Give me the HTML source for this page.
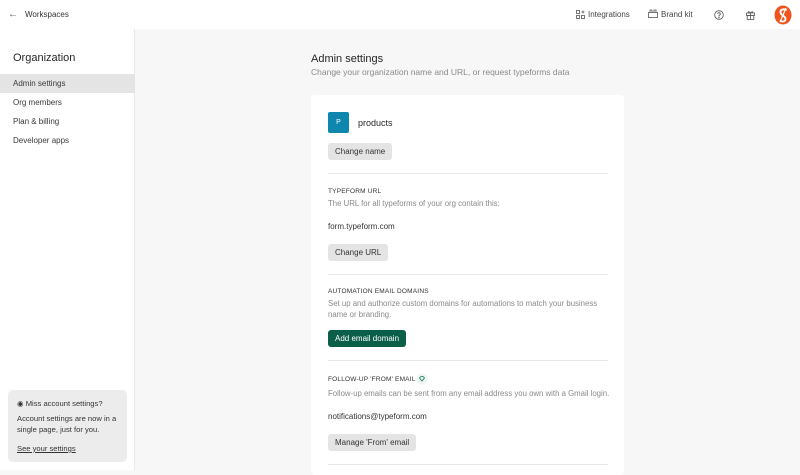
<!DOCTYPE html>
<html><head><meta charset="utf-8"><style>
*{margin:0;padding:0;box-sizing:border-box}
body{width:800px;height:470px;overflow:hidden;font-family:"Liberation Sans",sans-serif;background:#f7f7f7;color:#262627;position:relative}
.top{position:absolute;left:0;top:0;width:800px;height:29px;background:#fff;font-size:8px}
.side{position:absolute;left:0;top:29px;width:135px;height:441px;background:#fff;border-right:1px solid #e8e8e8}
.abs{position:absolute}
.nav{position:absolute;left:0;width:135px;height:19px;font-size:8px;line-height:19px;padding-left:13px;color:#3a3a3a}
.card{position:absolute;left:311px;top:95px;width:313px;height:380px;background:#fff;border-radius:4px}
.btn{position:absolute;height:17px;border-radius:3px;background:#e4e4e4;font-size:8px;line-height:17px;padding:0 7px;color:#333}
.hr{position:absolute;left:17px;width:280px;height:1px;background:#e8e8e8}
.lbl{position:absolute;left:17px;font-size:6.5px;letter-spacing:.2px;color:#333}
.desc{position:absolute;left:17px;font-size:7.8px;color:#8a8a8a;line-height:11px;width:285px}
.val{position:absolute;left:17px;font-size:8px;color:#333}
</style></head><body>
<div class="top">
<div class="abs" style="left:8px;top:9px;font-size:10px;color:#555">&#8592;</div>
<div class="abs" style="left:25px;top:10px;color:#333">Workspaces</div>
<svg class="abs" style="left:576px;top:10px" width="9" height="9" viewBox="0 0 9 9" fill="none" stroke="#555" stroke-width=".8"><rect x=".5" y=".5" width="3" height="3"/><rect x=".5" y="5.5" width="3" height="3"/><rect x="5.5" y="5.5" width="3" height="3"/><path d="M7 .5v3M5.5 2h3"/></svg>
<div class="abs" style="left:588px;top:10px;color:#444">Integrations</div>
<svg class="abs" style="left:648px;top:9px" width="10" height="9" viewBox="0 0 10 9" fill="none" stroke="#555" stroke-width=".8"><rect x=".5" y="3.5" width="9" height="5"/><path d="M2 3.5V1h2v2.5M6 3.5V1h2v2.5"/></svg>
<div class="abs" style="left:661px;top:10px;color:#444">Brand kit</div>
<svg class="abs" style="left:714px;top:10px" width="10" height="10" viewBox="0 0 10 10" fill="none" stroke="#555" stroke-width=".8"><circle cx="5" cy="5" r="4.3"/><path d="M3.7 4a1.3 1.3 0 1 1 1.3 1.3V6.2"/><circle cx="5" cy="7.5" r=".3" fill="#555"/></svg>
<svg class="abs" style="left:746px;top:10px" width="9" height="10" viewBox="0 0 9 10" fill="none" stroke="#555" stroke-width=".8"><rect x=".5" y="3" width="8" height="2.5"/><rect x="1.2" y="5.5" width="6.6" height="4"/><path d="M4.5 3v6.5M4.5 3C3 1 1.5 1.5 2.5 3M4.5 3C6 1 7.5 1.5 6.5 3"/></svg>
<svg class="abs" style="left:774px;top:5px" width="18" height="20" viewBox="0 0 18 20"><ellipse cx="9" cy="10" rx="8.5" ry="9.5" fill="#f0541c"/><path d="M12.5 5.5C11 3.5 6 4 6.5 7.5s5 3 5 6.5c0 3-4 3-5.5 1.5" stroke="#fff" stroke-width="1.8" fill="none"/><path d="M12 3 6 17" stroke="#fff" stroke-width="1.2" fill="none"/></svg>
</div>
<div class="side">
<div class="abs" style="left:13px;top:23px;font-size:11px;color:#262627">Organization</div>
<div class="nav" style="top:45px;background:#e4e4e4">Admin settings</div>
<div class="nav" style="top:64px">Org members</div>
<div class="nav" style="top:83px">Plan &amp; billing</div>
<div class="nav" style="top:102px">Developer apps</div>
<div class="abs" style="left:8px;top:361px;width:119px;height:72px;background:#ececec;border-radius:5px;font-size:7.6px;color:#333">
<div class="abs" style="left:9px;top:9px">&#9673; Miss account settings?</div>
<div class="abs" style="left:9px;top:24px;line-height:10.5px;width:108px">Account settings are now in a single page, just for you.</div>
<div class="abs" style="left:9px;top:54px;text-decoration:underline">See your settings</div>
</div>
</div>
<div class="abs" style="left:311px;top:53px;font-size:11px;color:#262627">Admin settings</div>
<div class="abs" style="left:311px;top:67px;font-size:8.5px;color:#8a8a8a">Change your organization name and URL, or request typeforms data</div>
<div class="card">
<div class="abs" style="left:17px;top:17px;width:21px;height:21px;background:#0e86ad;border-radius:2px;color:#fff;font-size:7px;text-align:center;line-height:21px">P</div>
<div class="abs" style="left:47px;top:23px;font-size:9px;color:#262627">products</div>
<div class="btn" style="left:17px;top:48px">Change name</div>
<div class="hr" style="top:78px"></div>
<div class="lbl" style="top:93px">TYPEFORM URL</div>
<div class="desc" style="top:103px">The URL for all typeforms of your org contain this:</div>
<div class="val" style="top:127px">form.typeform.com</div>
<div class="btn" style="left:17px;top:149px">Change URL</div>
<div class="hr" style="top:179px"></div>
<div class="lbl" style="top:193px">AUTOMATION EMAIL DOMAINS</div>
<div class="desc" style="top:203px">Set up and authorize custom domains for automations to match your business name or branding.</div>
<div class="btn" style="left:17px;top:235px;background:#0b5e48;color:#fff">Add email domain</div>
<div class="hr" style="top:265px"></div>
<div class="lbl" style="top:281px">FOLLOW-UP 'FROM' EMAIL</div>
<svg class="abs" style="left:105px;top:278px" width="12" height="12" viewBox="0 0 12 12"><circle cx="6" cy="6" r="5.5" fill="#eef5f2"/><path d="M3.5 5 5 3.5h2L8.5 5 6 8z" fill="none" stroke="#0b7a5a" stroke-width=".8"/></svg>
<div class="desc" style="top:293px">Follow-up emails can be sent from any email address you own with a Gmail login.</div>
<div class="val" style="top:317px">notifications@typeform.com</div>
<div class="btn" style="left:17px;top:339px">Manage 'From' email</div>
<div class="hr" style="top:369px"></div>
</div>
</body></html>
